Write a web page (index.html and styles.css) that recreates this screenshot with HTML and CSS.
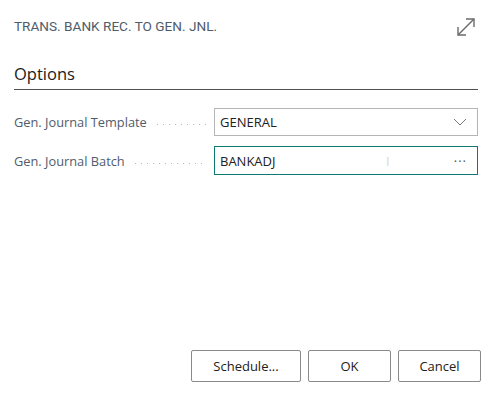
FILE: index.html
```html
<!DOCTYPE html>
<html lang="en">
<head>
    <meta charset="UTF-8">
    <title>Trans. Bank Rec. to Gen. Jnl.</title>
    <link rel="stylesheet" href="styles.css">
</head>
<body>
    <div class="dialog">
        <!-- Header -->
        <div class="dialog-header">
            <span class="dialog-title">TRANS. BANK REC. TO GEN. JNL.</span>
            <button class="icon-btn" title="Expand">
                <svg width="22" height="22" viewBox="0 0 22 22" fill="none" stroke="#6b6b6b" stroke-width="1.4">
                    <path d="M3 19 L19 3"/>
                    <path d="M11 3 H19 V11"/>
                    <path d="M3 11 V19 H11"/>
                </svg>
            </button>
        </div>

        <!-- Options group -->
        <div class="group">
            <h2 class="group-title">Options</h2>
            <div class="field">
                <label class="field-label">Gen. Journal Template</label>
                <div class="field-input">
                    <span class="field-value">GENERAL</span>
                    <svg width="14" height="8" viewBox="0 0 14 8" fill="none" stroke="#7a7a7a" stroke-width="1">
                        <path d="M1 1 L7 7 L13 1"/>
                    </svg>
                </div>
            </div>
            <div class="field">
                <label class="field-label">Gen. Journal Batch</label>
                <div class="field-input active">
                    <span class="field-value">BANKADJ</span>
                    <span class="caret">I</span>
                    <span class="lookup">&middot;&middot;&middot;</span>
                </div>
            </div>
        </div>

        <!-- Footer actions -->
        <div class="dialog-footer">
            <button class="btn btn-wide">Schedule...</button>
            <button class="btn">OK</button>
            <button class="btn">Cancel</button>
        </div>
    </div>
</body>
</html>
```

FILE: styles.css
```css
body {
    margin: 0;
    padding: 0;
    background-color: #fff;
    font-family: "Open Sans", Arial, sans-serif;
    color: #212121;
}

.dialog {
    width: 491px;
    height: 394px;
    box-sizing: border-box;
    padding: 0 10px 0 14px;
    display: flex;
    flex-direction: column;
}

.dialog-header {
    display: flex;
    justify-content: space-between;
    align-items: center;
    height: 54px;
    padding-right: 4px;
}

.dialog-title {
    font-family: Roboto, sans-serif;
    font-size: 13.6px;
    color: #4f5b6b;
    margin-top: -3px;
}

.icon-btn {
    background: none;
    border: none;
    padding: 0;
    width: 22px;
    height: 22px;
    cursor: pointer;
}

.group {
    padding-right: 3px;
}

.group-title {
    font-size: 16.5px;
    font-weight: 400;
    margin: 8px 0 0;
    padding-bottom: 4px;
    border-bottom: 1px solid #505050;
    color: #212121;
}

.field {
    display: flex;
    align-items: center;
    margin-top: 10px;
}

.group-title + .field {
    margin-top: 18px;
}

.field-label {
    flex: 0 0 200px;
    display: flex;
    align-items: center;
    font-size: 12.8px;
    color: #505c6d;
}

/* dotted leader between label and input */
.field-label::after {
    content: "";
    flex: 1;
    height: 1px;
    margin: 5px 8px 0 10px;
    background-image: linear-gradient(to right, #b8b8b8 1px, transparent 1px);
    background-size: 6px 1px;
    background-repeat: repeat-x;
}

.field-input {
    flex: 1;
    height: 28px;
    box-sizing: border-box;
    border: 1px solid #b5b5b5;
    display: flex;
    align-items: center;
    padding: 0 10px 0 5px;
    font-size: 13px;
    color: #212121;
}

.field-input.active {
    height: 29px;
    border-color: #0e7a74;
}

.field-value {
    flex: 1;
}

.caret {
    color: #d8d8d8;
    font-size: 13px;
    margin-right: 64px;
}

.lookup {
    font-size: 13px;
    color: #555;
    letter-spacing: 1px;
}

.dialog-footer {
    margin-top: auto;
    margin-bottom: 12px;
    display: flex;
    justify-content: flex-end;
    gap: 7px;
}

.btn {
    width: 83px;
    height: 32px;
    border: 1px solid #8a8a8a;
    border-radius: 2px;
    background-color: #fff;
    font-family: "Open Sans", Arial, sans-serif;
    font-size: 13px;
    color: #212121;
    cursor: pointer;
}

.btn-wide {
    width: 110px;
}
```
